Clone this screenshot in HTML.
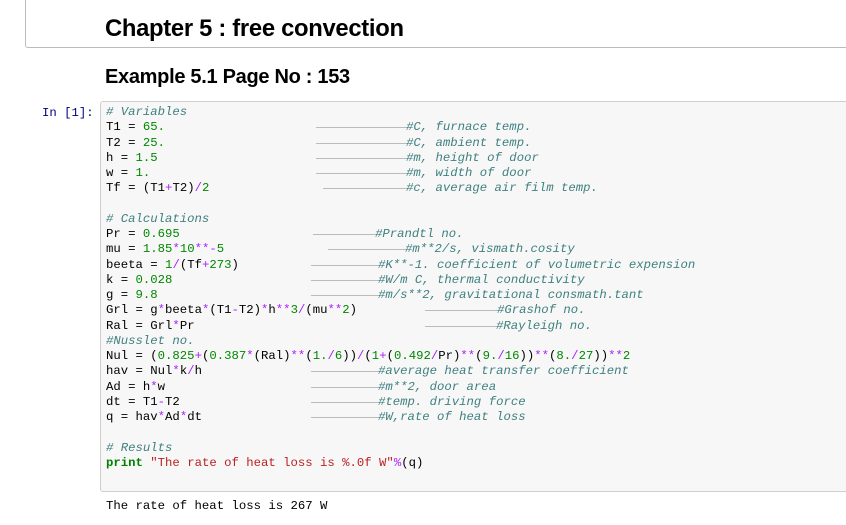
<!DOCTYPE html>
<html><head><meta charset="utf-8"><style>
body{margin:0;width:846px;height:525px;background:#fff;position:relative;overflow:hidden;font-family:"Liberation Sans",sans-serif}
.hbox{position:absolute;left:25px;top:-5px;width:830px;height:51px;border:1px solid #bbb;border-radius:3px}
h1{position:absolute;left:105px;top:15px;margin:0;font-size:23.8px;font-weight:bold;color:#000;letter-spacing:-0.3px}
h2{position:absolute;left:105px;top:66px;margin:0;font-size:20px;font-weight:bold;color:#000;letter-spacing:-0.3px}
.prompt{position:absolute;left:42px;top:106px;font:12.3px "Liberation Mono",monospace;color:#000080}
.cell{position:absolute;left:100px;top:101px;width:760px;height:389px;background:#f7f7f7;border:1px solid #cfcfcf;border-radius:3px}
.code{position:absolute;left:106px;top:105px;font:12.3px/15.25px "Liberation Mono",monospace;color:#000}
.l{position:relative;height:15.25px;white-space:pre}
.c{position:absolute;top:0;color:#408080;font-style:italic}
.n{color:#080}.o{color:#a2f}.s{color:#ba2121}.k{color:#008000;font-weight:bold}.cm{color:#408080;font-style:italic}
.t{position:absolute;top:7px;height:1px;background:#bbb}
.out{position:absolute;left:106px;top:499px;font:12.3px "Liberation Mono",monospace;color:#000}
</style></head><body>
<div class="hbox"></div>
<h1>Chapter 5 : free convection</h1>
<h2>Example 5.1 Page No : 153</h2>
<div class="prompt">In [1]:</div>
<div class="cell"></div>
<div class="code"><div class="l"><span class="cm"># Variables</span></div><div class="l">T1 = <span class="n">65.</span><i class="t" style="left:210px;width:90px"></i><span class="c" style="left:300px">#C, furnace temp.</span></div><div class="l">T2 = <span class="n">25.</span><i class="t" style="left:210px;width:90px"></i><span class="c" style="left:300px">#C, ambient temp.</span></div><div class="l">h = <span class="n">1.5</span><i class="t" style="left:210px;width:90px"></i><span class="c" style="left:300px">#m, height of door</span></div><div class="l">w = <span class="n">1.</span><i class="t" style="left:210px;width:90px"></i><span class="c" style="left:300px">#m, width of door</span></div><div class="l">Tf = (T1<span class="o">+</span>T2)<span class="o">/</span><span class="n">2</span><i class="t" style="left:217px;width:83px"></i><span class="c" style="left:300px">#c, average air film temp.</span></div><div class="l"></div><div class="l"><span class="cm"># Calculations</span></div><div class="l">Pr = <span class="n">0.695</span><i class="t" style="left:207px;width:62px"></i><span class="c" style="left:269px">#Prandtl no.</span></div><div class="l">mu = <span class="n">1.85</span><span class="o">*</span><span class="n">10</span><span class="o">**-</span><span class="n">5</span><i class="t" style="left:222px;width:77px"></i><span class="c" style="left:299px">#m**2/s, vismath.cosity</span></div><div class="l">beeta = <span class="n">1</span><span class="o">/</span>(Tf<span class="o">+</span><span class="n">273</span>)<i class="t" style="left:205px;width:67px"></i><span class="c" style="left:272px">#K**-1. coefficient of volumetric expension</span></div><div class="l">k = <span class="n">0.028</span><i class="t" style="left:205px;width:67px"></i><span class="c" style="left:272px">#W/m C, thermal conductivity</span></div><div class="l">g = <span class="n">9.8</span><i class="t" style="left:205px;width:67px"></i><span class="c" style="left:272px">#m/s**2, gravitational consmath.tant</span></div><div class="l">Grl = g<span class="o">*</span>beeta<span class="o">*</span>(T1<span class="o">-</span>T2)<span class="o">*</span>h<span class="o">**</span><span class="n">3</span><span class="o">/</span>(mu<span class="o">**</span><span class="n">2</span>)<i class="t" style="left:319px;width:72px"></i><span class="c" style="left:391px">#Grashof no.</span></div><div class="l">Ral = Grl<span class="o">*</span>Pr<i class="t" style="left:319px;width:71px"></i><span class="c" style="left:390px">#Rayleigh no.</span></div><div class="l"><span class="cm">#Nusslet no.</span></div><div class="l">Nul = (<span class="n">0.825</span><span class="o">+</span>(<span class="n">0.387</span><span class="o">*</span>(Ral)<span class="o">**</span>(<span class="n">1.</span><span class="o">/</span><span class="n">6</span>))<span class="o">/</span>(<span class="n">1</span><span class="o">+</span>(<span class="n">0.492</span><span class="o">/</span>Pr)<span class="o">**</span>(<span class="n">9.</span><span class="o">/</span><span class="n">16</span>))<span class="o">**</span>(<span class="n">8.</span><span class="o">/</span><span class="n">27</span>))<span class="o">**</span><span class="n">2</span></div><div class="l">hav = Nul<span class="o">*</span>k<span class="o">/</span>h<i class="t" style="left:205px;width:67px"></i><span class="c" style="left:272px">#average heat transfer coefficient</span></div><div class="l">Ad = h<span class="o">*</span>w<i class="t" style="left:205px;width:67px"></i><span class="c" style="left:272px">#m**2, door area</span></div><div class="l">dt = T1<span class="o">-</span>T2<i class="t" style="left:205px;width:67px"></i><span class="c" style="left:272px">#temp. driving force</span></div><div class="l">q = hav<span class="o">*</span>Ad<span class="o">*</span>dt<i class="t" style="left:205px;width:67px"></i><span class="c" style="left:272px">#W,rate of heat loss</span></div><div class="l"></div><div class="l"><span class="cm"># Results</span></div><div class="l"><span class="k">print</span> <span class="s">"The rate of heat loss is %.0f W"</span><span class="o">%</span>(q)</div></div>
<div class="out">The rate of heat loss is 267 W</div>
</body></html>
